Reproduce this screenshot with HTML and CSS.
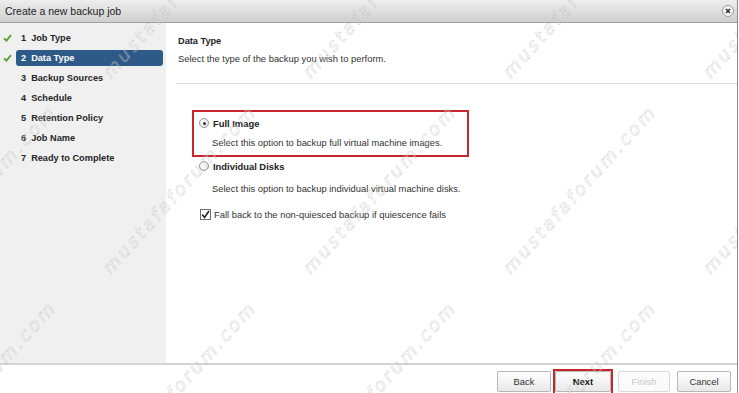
FILE: index.html
```html
<!DOCTYPE html>
<html lang="en">
<head>
    <meta charset="UTF-8">
    <meta name="viewport" content="width=device-width, initial-scale=1.0">
    <title>Create a new backup job</title>
    <link rel="stylesheet" href="styles.css">
</head>
<body>
    <div class="dialog">
        <div class="titlebar">
            <span class="title">Create a new backup job</span>
            <span class="close">
                <svg width="12" height="12" viewBox="0 0 12 12">
                    <circle cx="6" cy="6" r="5.5" fill="#f4f4f4" stroke="#9a9a9a"/>
                    <path d="M4 4 L8 8 M8 4 L4 8" stroke="#333" stroke-width="1.6"/>
                </svg>
            </span>
        </div>
        <div class="main">
            <ul class="steps">
                <li class="step"><span class="mark"><svg width="9" height="8" viewBox="0 0 9 8"><path d="M1 4.3 L3.4 6.6 L8 1.2" fill="none" stroke="#53a032" stroke-width="1.8"/></svg></span><span class="label"><span class="num">1</span>Job Type</span></li>
                <li class="step current"><span class="mark"><svg width="9" height="8" viewBox="0 0 9 8"><path d="M1 4.3 L3.4 6.6 L8 1.2" fill="none" stroke="#53a032" stroke-width="1.8"/></svg></span><span class="label"><span class="num">2</span>Data Type</span></li>
                <li class="step"><span class="mark"></span><span class="label"><span class="num">3</span>Backup Sources</span></li>
                <li class="step"><span class="mark"></span><span class="label"><span class="num">4</span>Schedule</span></li>
                <li class="step"><span class="mark"></span><span class="label"><span class="num">5</span>Retention Policy</span></li>
                <li class="step"><span class="mark"></span><span class="label"><span class="num">6</span>Job Name</span></li>
                <li class="step"><span class="mark"></span><span class="label"><span class="num">7</span>Ready to Complete</span></li>
            </ul>
            <div class="content">
                <div class="head">
                    <h2>Data Type</h2>
                    <p>Select the type of the backup you wish to perform.</p>
                </div>
                <div class="options">
                    <div class="highlight">
                        <div class="radio-row"><span class="radio on"></span>Full Image</div>
                        <p class="hint">Select this option to backup full virtual machine images.</p>
                    </div>
                    <div class="option">
                        <div class="radio-row"><span class="radio"></span>Individual Disks</div>
                        <p class="hint hint-loose">Select this option to backup individual virtual machine disks.</p>
                    </div>
                    <div class="check-row">
                        <span class="checkbox">
                            <svg width="9" height="9" viewBox="0 0 9 9"><path d="M1.2 4.6 L3.5 7.4 L8 1" fill="none" stroke="#222" stroke-width="1.6"/></svg>
                        </span>
                        Fall back to the non-quiesced backup if quiescence fails
                    </div>
                </div>
            </div>
        </div>
        <div class="footer">
            <button class="btn btn-back">Back</button>
            <span class="next-mark"><button class="btn btn-next">Next</button></span>
            <button class="btn btn-finish" disabled>Finish</button>
            <button class="btn btn-cancel">Cancel</button>
        </div>

        <div class="watermark">
            <div class="wm"><span>mustafaforum.com</span></div>
            <div class="wm"><span>mustafaforum.com</span></div>
            <div class="wm"><span>mustafaforum.com</span></div>
            <div class="wm"><span>mustafaforum.com</span></div>
            <div class="wm"><span>mustafaforum.com</span></div>
            <div class="wm"><span>mustafaforum.com</span></div>
            <div class="wm"><span>mustafaforum.com</span></div>
            <div class="wm"><span>mustafaforum.com</span></div>
            <div class="wm"><span>mustafaforum.com</span></div>
            <div class="wm"><span>mustafaforum.com</span></div>
            <div class="wm"><span>mustafaforum.com</span></div>
            <div class="wm"><span>mustafaforum.com</span></div>
            <div class="wm"><span>mustafaforum.com</span></div>
            <div class="wm"><span>mustafaforum.com</span></div>
            <div class="wm"><span>mustafaforum.com</span></div>
        </div>
    </div>
</body>
</html>
```

FILE: styles.css
```css
body {
    margin: 0;
    background: #fff;
    font-family: "Liberation Sans", Arial, sans-serif;
    font-size: 9.4px;
    color: #333;
}
.dialog {
    position: relative;
    width: 737px;
    height: 393px;
    border-right: 1px solid #8a8a8a;
    display: flex;
    flex-direction: column;
    overflow: hidden;
}
.titlebar {
    height: 22px;
    flex: none;
    display: flex;
    align-items: center;
    padding: 0 3px 0 5px;
    background: linear-gradient(#eeeeee, #cfcfcf);
    border-bottom: 1px solid #a2a2a2;
    font-size: 10.5px;
    color: #1e1e1e;
}
.close {
    margin-left: auto;
    width: 12px;
    height: 12px;
    display: flex;
}
.main {
    flex: 1;
    display: flex;
    min-height: 0;
}
.steps {
    list-style: none;
    margin: 0;
    padding: 7px 0 0;
    width: 166px;
    flex: none;
    background: #f0f0f0;
}
.step {
    display: flex;
    align-items: center;
    height: 16px;
    margin-bottom: 4px;
}
.step .mark {
    width: 16px;
    padding-left: 3px;
    box-sizing: border-box;
    display: flex;
}
.step .label {
    width: 147px;
    padding-left: 5px;
    box-sizing: border-box;
    line-height: 16px;
    border-radius: 3px;
    font-size: 9.2px;
    font-weight: bold;
    color: #262626;
}
.step.current .label {
    background: #2e5a87;
    color: #fff;
}
.num {
    margin-right: 5px;
}
.content {
    flex: 1;
    background: #fff;
}
.head {
    margin-left: 10px;
    padding: 10px 0 16px 2px;
    border-bottom: 1px solid #dcdcdc;
}
.head h2 {
    margin: 0;
    font-size: 9.2px;
    line-height: 16px;
    color: #222;
}
.head p {
    margin: 2px 0 0;
    line-height: 16px;
}
.options {
    padding: 26px 0 0 26px;
}
.highlight {
    width: 277px;
    box-sizing: border-box;
    border: 2px solid #c9252c;
    padding: 3px 0 4px 5px;
}
.radio-row {
    display: flex;
    align-items: center;
    height: 16px;
    font-weight: bold;
    color: #222;
}
.radio {
    position: relative;
    flex: none;
    width: 10px;
    height: 10px;
    box-sizing: border-box;
    margin-right: 4px;
    border: 1px solid #949494;
    border-radius: 50%;
    background: radial-gradient(circle at 40% 35%, #fff, #e4e4e4);
}
.radio.on::after {
    content: "";
    position: absolute;
    left: 2.5px;
    top: 2.5px;
    width: 3px;
    height: 3px;
    border-radius: 50%;
    background: #333;
}
.hint {
    margin: 4px 0 0;
    padding-left: 13px;
    line-height: 16px;
}
.option {
    margin-top: 1px;
    padding-left: 7px;
}
.hint-loose {
    margin-top: 7px;
}
.check-row {
    display: flex;
    align-items: center;
    height: 16px;
    margin-top: 9px;
    padding-left: 8px;
}
.checkbox {
    flex: none;
    width: 11px;
    height: 11px;
    box-sizing: border-box;
    margin-right: 3px;
    border: 1px solid #6e6e6e;
    background: #fff;
    display: flex;
    align-items: center;
    justify-content: center;
}
.footer {
    flex: none;
    height: 24px;
    border-top: 2px solid #d4d4d4;
    display: flex;
    justify-content: flex-end;
    align-items: flex-start;
    padding: 4px 6px 0 0;
}
.btn {
    height: 21px;
    margin-top: 2px;
    padding: 0;
    border: 1px solid #b7b7b7;
    border-radius: 2px;
    background: linear-gradient(#ffffff, #e8e8e8);
    font-family: "Liberation Sans", Arial, sans-serif;
    font-size: 9.4px;
    color: #333;
}
.btn-back {
    width: 54px;
    margin-right: 2px;
}
.next-mark {
    display: flex;
    height: 25px;
    border: 2px solid #c9252c;
    border-bottom: 0;
}
.btn-next {
    width: 56px;
    margin-top: 0;
    font-weight: bold;
    color: #111;
}
.btn-finish {
    width: 52px;
    margin-left: 5px;
    border-color: #dadada;
    background: #fbfbfb;
    color: #c6c6c6;
}
.btn-cancel {
    width: 54px;
    margin-left: 7px;
}
.watermark {
    position: absolute;
    left: -87px;
    top: -115px;
    display: grid;
    grid-template-columns: repeat(5, 200px);
    grid-auto-rows: 196px;
    pointer-events: none;
}
.wm {
    display: flex;
    align-items: flex-end;
}
.wm span {
    font-family: "DejaVu Sans", sans-serif;
    font-size: 18px;
    font-style: italic;
    line-height: 1;
    letter-spacing: 3px;
    white-space: nowrap;
    color: rgba(255, 255, 255, 0.3);
    -webkit-text-stroke: 0.5px rgba(150, 150, 150, 0.45);
    transform-origin: 0 100%;
    transform: rotate(-48deg);
}
```
